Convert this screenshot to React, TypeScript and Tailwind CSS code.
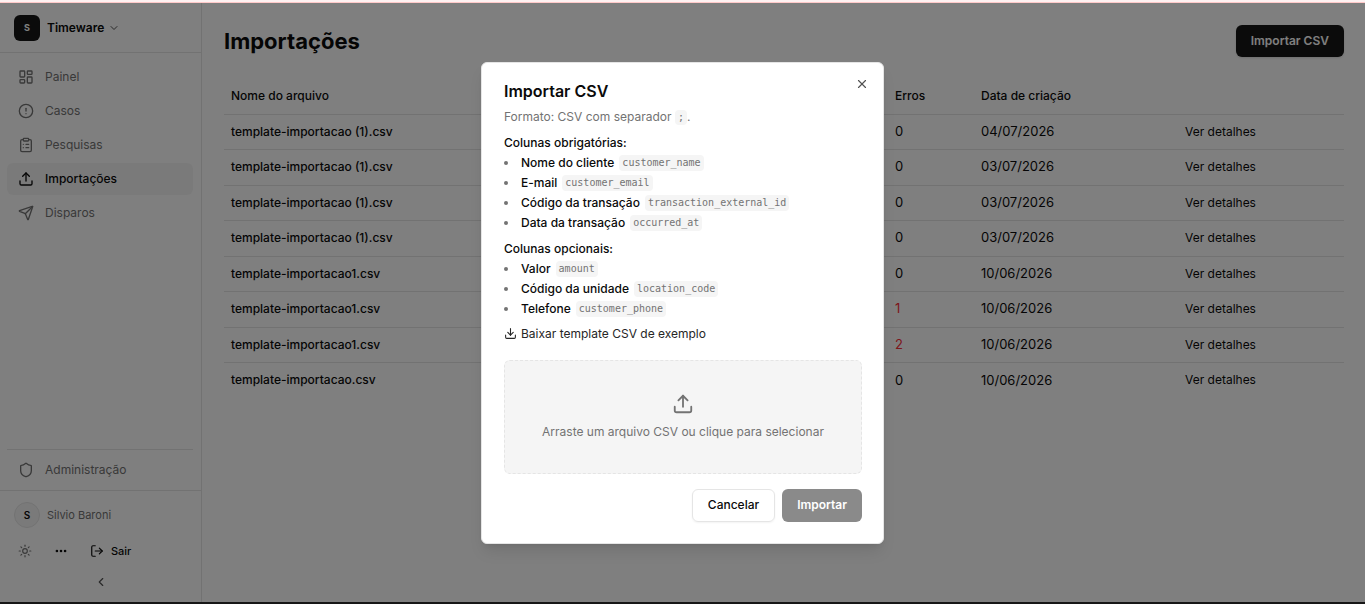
import type { ReactNode } from "react";
import {
  ChevronDown,
  ChevronLeft,
  CircleAlert,
  ClipboardList,
  Download,
  Ellipsis,
  LayoutDashboard,
  LogOut,
  Send,
  Shield,
  Sun,
  Upload,
  X,
} from "lucide-react";
import clsx from "clsx";

const navItems = [
  { label: "Painel", icon: LayoutDashboard },
  { label: "Casos", icon: CircleAlert },
  { label: "Pesquisas", icon: ClipboardList },
  { label: "Importações", icon: Upload, active: true },
  { label: "Disparos", icon: Send },
];

const imports = [
  { id: 1, file: "template-importacao (1).csv", errors: 0, date: "04/07/2026" },
  { id: 2, file: "template-importacao (1).csv", errors: 0, date: "03/07/2026" },
  { id: 3, file: "template-importacao (1).csv", errors: 0, date: "03/07/2026" },
  { id: 4, file: "template-importacao (1).csv", errors: 0, date: "03/07/2026" },
  { id: 5, file: "template-importacao1.csv", errors: 0, date: "10/06/2026" },
  { id: 6, file: "template-importacao1.csv", errors: 1, date: "10/06/2026" },
  { id: 7, file: "template-importacao1.csv", errors: 2, date: "10/06/2026" },
  { id: 8, file: "template-importacao.csv", errors: 0, date: "10/06/2026" },
];

interface Column {
  label: string;
  field: string;
}

const requiredColumns: Column[] = [
  { label: "Nome do cliente", field: "customer_name" },
  { label: "E-mail", field: "customer_email" },
  { label: "Código da transação", field: "transaction_external_id" },
  { label: "Data da transação", field: "occurred_at" },
];

const optionalColumns: Column[] = [
  { label: "Valor", field: "amount" },
  { label: "Código da unidade", field: "location_code" },
  { label: "Telefone", field: "customer_phone" },
];

const Sidebar = () => {
  return (
    <aside className="flex w-[202px] shrink-0 flex-col border-r border-neutral-200">
      <div className="flex h-[50px] items-center border-b border-neutral-200 px-3.5">
        <button className="flex items-center">
          <span className="flex size-[26px] items-center justify-center rounded-md bg-neutral-900 text-[9px] font-bold text-white">
            S
          </span>
          <span className="ml-[7px] text-xs font-semibold">Timeware</span>
          <ChevronDown className="ml-1 size-3 text-neutral-600" />
        </button>
      </div>

      <nav className="flex flex-1 flex-col gap-0.5 pt-2 pr-2 pl-[7px]">
        {navItems.map(({ label, icon: Icon, active }) => (
          <a
            key={label}
            href="#"
            className={clsx(
              "flex h-8 items-center gap-[11px] rounded-md px-[11px] text-xs",
              active ? "bg-neutral-100 font-medium" : "text-neutral-500"
            )}
          >
            <Icon className="size-4" />
            {label}
          </a>
        ))}
      </nav>

      <div className="mr-2 ml-[7px] border-t border-neutral-200 py-1">
        <a
          href="#"
          className="flex h-8 items-center gap-[11px] px-[11px] text-xs text-neutral-500"
        >
          <Shield className="size-4" />
          Administração
        </a>
      </div>

      <div className="border-t border-neutral-200 px-3.5 pt-[11px] pb-[13px]">
        <div className="flex items-center gap-[7px]">
          <span className="flex size-[26px] items-center justify-center rounded-full border border-neutral-200 bg-neutral-100 text-[10px] font-semibold">
            S
          </span>
          <span className="text-[11px] text-neutral-500">Silvio Baroni</span>
        </div>
        <div className="mt-[9px] flex h-7 items-center text-[11px] font-medium">
          <button
            aria-label="Alternar tema"
            className="flex w-[22px] justify-center text-neutral-500"
          >
            <Sun className="size-3.5" />
          </button>
          <button aria-label="Mais opções" className="ml-[18px]">
            <Ellipsis className="size-3.5" strokeWidth={2.5} />
          </button>
          <button className="ml-[22px] flex items-center gap-[7px]">
            <LogOut className="size-3.5" />
            Sair
          </button>
        </div>
        <button
          aria-label="Recolher menu"
          className="mx-auto mt-2.5 block text-neutral-600"
        >
          <ChevronLeft className="size-3.5" />
        </button>
      </div>
    </aside>
  );
};

const ImportsTable = () => {
  return (
    <table className="mt-[21px] w-full table-fixed text-left text-xs">
      <thead>
        <tr className="h-9 border-b border-neutral-200">
          <th className="px-[7px] font-medium">Nome do arquivo</th>
          <th className="w-[86px] px-[7px] font-medium">Erros</th>
          <th className="w-[204px] px-[7px] font-medium">Data de criação</th>
          <th className="w-[166px] px-[7px]" aria-label="Ações" />
        </tr>
      </thead>
      <tbody>
        {imports.map((item) => (
          <tr
            key={item.id}
            className="border-b border-neutral-200 last:border-b-0 odd:h-[35px] even:h-9"
          >
            <td className="px-[7px] font-medium">{item.file}</td>
            <td
              className={clsx(
                "px-[7px] text-[13px]",
                item.errors > 0 && "text-red-500"
              )}
            >
              {item.errors}
            </td>
            <td className="px-[7px] text-[13px]">{item.date}</td>
            <td className="px-[7px]">
              <a href="#">Ver detalhes</a>
            </td>
          </tr>
        ))}
      </tbody>
    </table>
  );
};

const Code = ({ children }: { children: ReactNode }) => {
  return (
    <code className="rounded-sm bg-neutral-100 px-[3px] py-0.5 font-['DejaVu_Sans_Mono',monospace] text-[10px] leading-3 font-normal text-neutral-500">
      {children}
    </code>
  );
};

const ColumnList = ({ title, columns }: { title: string; columns: Column[] }) => {
  return (
    <section className="mt-[5px] font-medium">
      <h3 className="leading-[21px]">{title}</h3>
      <ul>
        {columns.map((column) => (
          <li key={column.field} className="flex items-center">
            <span className="mr-[13px] size-1 rounded-full bg-neutral-500" />
            <span className="mr-[5px]">{column.label}</span>
            <Code>{column.field}</Code>
          </li>
        ))}
      </ul>
    </section>
  );
};

const ImportDialog = () => {
  return (
    <div
      role="dialog"
      aria-labelledby="import-title"
      className="relative w-[403px] rounded-md border border-neutral-200 bg-white pt-5 pr-[21px] pb-[21px] pl-[22px] text-xs leading-5 shadow-lg"
    >
      <button
        aria-label="Fechar"
        className="absolute top-3.5 right-3.5 text-neutral-600"
      >
        <X className="size-3.5" />
      </button>

      <h2 id="import-title" className="text-base leading-4 font-semibold">
        Importar CSV
      </h2>
      <p className="mt-[7px] leading-[21px] text-neutral-500">
        Formato: CSV com separador <Code>;</Code>.
      </p>

      <ColumnList title="Colunas obrigatórias:" columns={requiredColumns} />
      <ColumnList title="Colunas opcionais:" columns={optionalColumns} />

      <a href="#" className="mt-[5px] flex items-center gap-1 text-neutral-800">
        <Download className="size-[13px]" />
        Baixar template CSV de exemplo
      </a>

      <label className="mt-4 flex flex-col items-center gap-[7px] rounded-md border border-dashed border-neutral-200 bg-neutral-100 pt-8 pb-[31px] text-neutral-500">
        <Upload className="size-[22px]" />
        Arraste um arquivo CSV ou clique para selecionar
        <input type="file" accept=".csv" className="sr-only" />
      </label>

      <div className="mt-[15px] flex justify-end gap-[7px]">
        <button className="h-[33px] rounded-md border border-neutral-200 px-[15px] font-medium shadow-xs">
          Cancelar
        </button>
        <button
          disabled
          className="h-[33px] rounded-md bg-neutral-900 px-[15px] font-semibold text-white opacity-50"
        >
          Importar
        </button>
      </div>
    </div>
  );
};

export default function App() {
  return (
    <div className="flex min-h-screen flex-col border-b-2 border-neutral-900 bg-white font-[Inter,sans-serif] text-neutral-950">
      <div className="h-[3px] border-b border-red-200 bg-red-50" />
      <div className="relative flex flex-1">
        <Sidebar />
        <main className="min-w-0 flex-1 pt-[22px] pr-[21px] pl-[22px]">
          <header className="flex items-center justify-between">
            <h1 className="text-[22px] leading-8 font-bold">Importações</h1>
            <button className="h-8 rounded-md bg-neutral-900 px-[15px] text-xs font-semibold text-white shadow-sm">
              Importar CSV
            </button>
          </header>
          <ImportsTable />
        </main>

        <div className="absolute inset-0 flex items-center justify-center bg-black/50">
          <ImportDialog />
        </div>
      </div>
    </div>
  );
}
